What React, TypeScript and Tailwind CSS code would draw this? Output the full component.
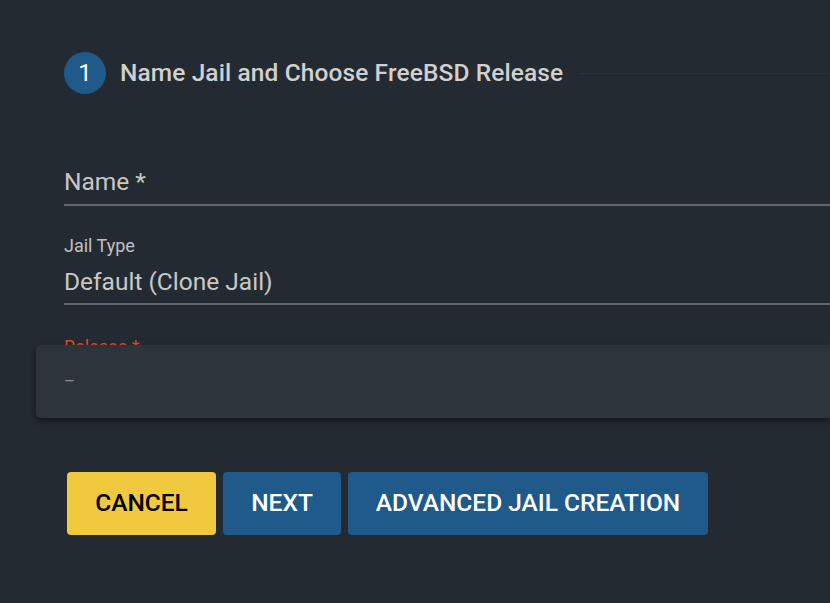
import React from "react";

function StepHeader() {
  return (
    <div className="flex items-center pl-16 pt-[52px]">
      <div className="w-[42px] h-[42px] rounded-full bg-[#1f5a8b] flex items-center justify-center text-[24px] text-white">
        1
      </div>
      <div className="ml-[14px] text-[24.5px] leading-[28px] font-medium text-[#d0d0d0] whitespace-nowrap tracking-[0.1px]">
        Name Jail and Choose FreeBSD Release
      </div>
      <div className="flex-1 ml-4 h-px bg-[#2c333c]" />
    </div>
  );
}

export default function App() {
  return (
    <div
      className="w-[830px] h-[603px] overflow-hidden bg-[#242a32]"
      style={{ fontFamily: "Roboto, 'Liberation Sans', sans-serif" }}
    >
      <StepHeader />

      <div className="pl-16 mt-[74px]">
        <div className="text-[24.5px] leading-[28px] text-[#c8c8c8]">Name *</div>
        <div className="mt-[8px] h-[2px] bg-[#62666c]" />
      </div>

      <div className="pl-16 mt-[30px]">
        <div className="text-[18px] leading-[20px] text-[#c0c0c0]">Jail Type</div>
        <div className="mt-[12px] text-[24.5px] leading-[28px] text-[#c8c8c8]">
          Default (Clone Jail)
        </div>
        <div className="mt-[7px] h-[2px] bg-[#62666c]" />
      </div>

      <div className="relative mt-[32px] h-[82px]">
        <div className="absolute left-16 top-0 text-[18px] leading-[20px] text-[#e2452b]">
          Release *
        </div>
        <div className="absolute left-9 right-0 top-[8px] h-[73px] rounded-l-[5px] bg-[#2e343b] shadow-[0_3px_6px_rgba(0,0,0,0.45)] flex items-center pl-7">
          <span className="text-[17px] text-[#8a8e94]">–</span>
        </div>
      </div>

      <div className="flex gap-[7px] pl-[67px] mt-[53px]">
        <button className="w-[149px] h-[63px] rounded-[4px] bg-[#f0c93f] text-[24.5px] font-medium text-black">
          CANCEL
        </button>
        <button className="w-[118px] h-[63px] rounded-[4px] bg-[#1f5a8b] text-[24.5px] font-medium text-white">
          NEXT
        </button>
        <button className="w-[360px] h-[63px] rounded-[4px] bg-[#1f5a8b] text-[24.5px] font-medium text-white">
          ADVANCED JAIL CREATION
        </button>
      </div>
    </div>
  );
}
